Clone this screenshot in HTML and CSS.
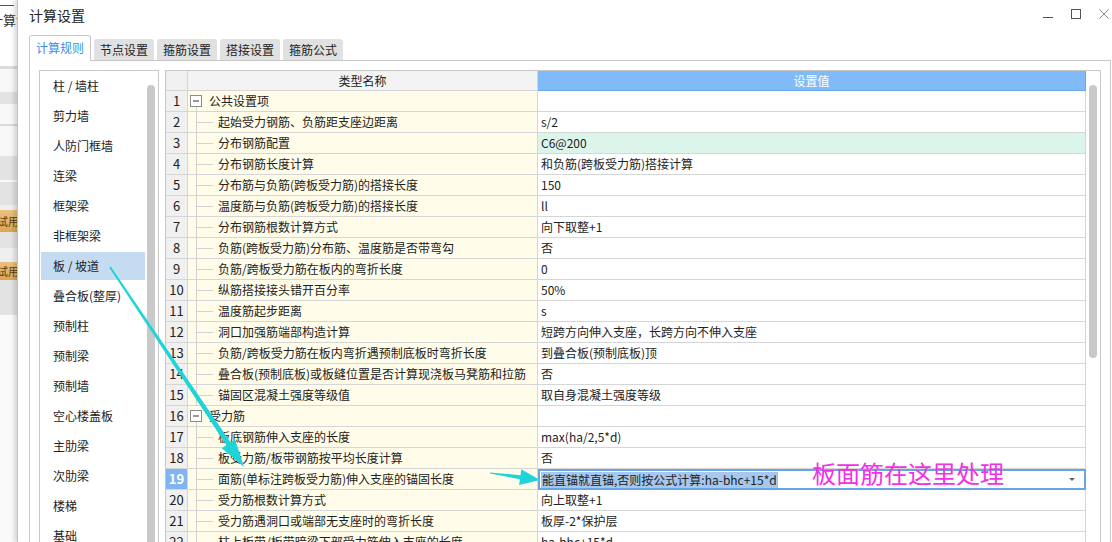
FILE: index.html
```html
<!DOCTYPE html>
<html lang="zh-CN">
<head>
<meta charset="utf-8">
<title>计算设置</title>
<link rel="stylesheet" href="styles.css">
</head>
<body>
<div class="app">
  <div class="bgstrip">
    <div class="bg-top"><span class="bg-dash"></span><span class="bg-title">计算设</span></div>
    <div class="bg-line"></div>
    <div class="bg-h23 bg-l"></div>
    <div class="bg-h12 bg-g"></div>
    <div class="bg-h20 bg-l"></div>
    <div class="bg-line2"></div>
    <div class="bg-h30 bg-l"></div>
    <div class="bg-h24 bg-g"></div>
    <div class="bg-h2 bg-l"></div>
    <div class="bg-h23 bg-g"></div>
    <div class="bg-h5 bg-m"></div>
    <div class="bg-badge bg-h22"><span>试用</span></div>
    <div class="bg-h16 bg-g"></div>
    <div class="bg-h14 bg-m"></div>
    <div class="bg-badge bg-h18"><span>试用</span></div>
    <div class="bg-h35 bg-g"></div>
    <div class="bg-rest"></div>
  </div>

  <div class="dialog">
    <div class="titlebar">
      <span class="title">计算设置</span>
      <svg class="winctl" width="72" height="24" viewBox="0 0 72 24">
        <line x1="3" y1="17.5" x2="13" y2="17.5" stroke="#555" stroke-width="1"/>
        <rect x="31.5" y="9.5" width="9" height="9" fill="none" stroke="#555" stroke-width="1"/>
        <line x1="59.5" y1="9.5" x2="68.5" y2="18.5" stroke="#8a8a8a" stroke-width="1"/>
        <line x1="68.5" y1="9.5" x2="59.5" y2="18.5" stroke="#8a8a8a" stroke-width="1"/>
      </svg>
    </div>

    <div class="tabs">
      <div class="tab active">计算规则</div>
      <div class="tab">节点设置</div>
      <div class="tab">箍筋设置</div>
      <div class="tab">搭接设置</div>
      <div class="tab">箍筋公式</div>
    </div>

    <div class="panel">
      <div class="list">
        <ul>
          <li>柱 / 墙柱</li>
          <li>剪力墙</li>
          <li>人防门框墙</li>
          <li>连梁</li>
          <li>框架梁</li>
          <li>非框架梁</li>
          <li class="sel">板 / 坡道</li>
          <li>叠合板(整厚)</li>
          <li>预制柱</li>
          <li>预制梁</li>
          <li>预制墙</li>
          <li>空心楼盖板</li>
          <li>主肋梁</li>
          <li>次肋梁</li>
          <li>楼梯</li>
          <li>基础</li>
        </ul>
        <div class="vscroll"><div class="thumb list-thumb"></div></div>
      </div>

      <div class="grid">
        <div class="rows">
          <div class="row head">
            <div class="num"></div>
            <div class="name hname">类型名称</div>
            <div class="val hval">设置值</div>
          </div>
          <div class="row"><div class="num">1</div><div class="name parent"><svg class="box" width="12" height="12" viewBox="0 0 12 12"><rect x="0.5" y="0.5" width="11" height="11" fill="#fff" stroke="#8c8c8c"/><line x1="3" y1="6" x2="9" y2="6" stroke="#333"/></svg>公共设置项</div><div class="val"></div></div>
          <div class="row"><div class="num">2</div><div class="name child">起始受力钢筋、负筋距支座边距离</div><div class="val">s/2</div></div>
          <div class="row"><div class="num">3</div><div class="name child">分布钢筋配置</div><div class="val mint">C6@200</div></div>
          <div class="row"><div class="num">4</div><div class="name child">分布钢筋长度计算</div><div class="val">和负筋(跨板受力筋)搭接计算</div></div>
          <div class="row"><div class="num">5</div><div class="name child">分布筋与负筋(跨板受力筋)的搭接长度</div><div class="val">150</div></div>
          <div class="row"><div class="num">6</div><div class="name child">温度筋与负筋(跨板受力筋)的搭接长度</div><div class="val">ll</div></div>
          <div class="row"><div class="num">7</div><div class="name child">分布钢筋根数计算方式</div><div class="val">向下取整+1</div></div>
          <div class="row"><div class="num">8</div><div class="name child">负筋(跨板受力筋)分布筋、温度筋是否带弯勾</div><div class="val">否</div></div>
          <div class="row"><div class="num">9</div><div class="name child">负筋/跨板受力筋在板内的弯折长度</div><div class="val">0</div></div>
          <div class="row"><div class="num">10</div><div class="name child">纵筋搭接接头错开百分率</div><div class="val">50%</div></div>
          <div class="row"><div class="num">11</div><div class="name child">温度筋起步距离</div><div class="val">s</div></div>
          <div class="row"><div class="num">12</div><div class="name child">洞口加强筋端部构造计算</div><div class="val">短跨方向伸入支座，长跨方向不伸入支座</div></div>
          <div class="row"><div class="num">13</div><div class="name child">负筋/跨板受力筋在板内弯折遇预制底板时弯折长度</div><div class="val">到叠合板(预制底板)顶</div></div>
          <div class="row"><div class="num">14</div><div class="name child">叠合板(预制底板)或板缝位置是否计算现浇板马凳筋和拉筋</div><div class="val">否</div></div>
          <div class="row"><div class="num">15</div><div class="name child">锚固区混凝土强度等级值</div><div class="val">取自身混凝土强度等级</div></div>
          <div class="row"><div class="num">16</div><div class="name parent"><svg class="box" width="12" height="12" viewBox="0 0 12 12"><rect x="0.5" y="0.5" width="11" height="11" fill="#fff" stroke="#8c8c8c"/><line x1="3" y1="6" x2="9" y2="6" stroke="#333"/></svg>受力筋</div><div class="val"></div></div>
          <div class="row"><div class="num">17</div><div class="name child">板底钢筋伸入支座的长度</div><div class="val">max(ha/2,5*d)</div></div>
          <div class="row"><div class="num">18</div><div class="name child">板受力筋/板带钢筋按平均长度计算</div><div class="val">否</div></div>
          <div class="row current"><div class="num">19</div><div class="name child">面筋(单标注跨板受力筋)伸入支座的锚固长度</div><div class="val edit"><span class="selected">能直锚就直锚,否则按公式计算:ha-bhc+15*d</span><span class="note">板面筋在这里处理</span><span class="caret"></span></div></div>
          <div class="row"><div class="num">20</div><div class="name child">受力筋根数计算方式</div><div class="val">向上取整+1</div></div>
          <div class="row"><div class="num">21</div><div class="name child">受力筋遇洞口或端部无支座时的弯折长度</div><div class="val">板厚-2*保护层</div></div>
          <div class="row"><div class="num">22</div><div class="name child">柱上板带/板带暗梁下部受力筋伸入支座的长度</div><div class="val">ha-bhc+15*d</div></div>
        </div>
        <div class="gscroll"><div class="thumb grid-thumb"></div></div>
      </div>
    </div>
  </div>

  <svg class="arrows" width="1112" height="542" viewBox="0 0 1112 542">
    <polygon fill="#1fd4d8" points="109.2,267.6 226.3,445.1 221.8,448.2 244,467 235.0,439.2 230.5,442.3 110.8,266.4"/>
    <polygon fill="#1fd4d8" points="489.9,473.6 519.9,479.2 519.1,485.1 540,480 521.3,469.3 520.5,475.2 490.1,472.4"/>
  </svg>
</div>
</body>
</html>
```

FILE: styles.css
```css
* { box-sizing: border-box; margin: 0; padding: 0; }

html, body {
  width: 1112px;
  height: 542px;
  overflow: hidden;
}

body {
  font-family: "Noto Sans CJK SC", "Noto Sans", sans-serif;
  font-size: 12px;
  color: #222;
  background: #fff;
}

.app {
  position: relative;
  display: flex;
  height: 542px;
}

/* ---------- background application strip ---------- */
.bgstrip {
  width: 17px;
  flex: none;
  display: flex;
  flex-direction: column;
  overflow: hidden;
  background: #fafafa;
}
.bg-top {
  height: 66px;
  background: #fff;
  display: flex;
  flex-direction: column;
}
.bg-dash {
  display: block;
  width: 14px;
  height: 1px;
  margin-top: 5px;
  background: #555;
}
.bg-title {
  display: block;
  margin-left: -10px;
  margin-top: 6px;
  font-size: 13px;
  line-height: 16px;
  white-space: nowrap;
  color: #333;
}
.bg-line { height: 3px; background: #dcdcdc; }
.bg-line2 { height: 2px; background: #d9d9d9; }
.bg-l { background: #f8f8f8; }
.bg-g { background: #e3e3e3; }
.bg-m { background: #efefef; }
.bg-h2 { height: 2px; }
.bg-h5 { height: 5px; }
.bg-h12 { height: 12px; }
.bg-h14 { height: 14px; }
.bg-h16 { height: 16px; }
.bg-h18 { height: 18px; }
.bg-h20 { height: 20px; }
.bg-h22 { height: 22px; }
.bg-h23 { height: 23px; }
.bg-h24 { height: 24px; }
.bg-h30 { height: 30px; }
.bg-h35 { height: 35px; }
.bg-badge {
  background: linear-gradient(#eac27e, #d9a457);
  overflow: hidden;
  display: flex;
  align-items: center;
}
.bg-badge span {
  margin-left: -3px;
  font-size: 11px;
  color: #5b3a0e;
  white-space: nowrap;
}
.bg-rest { flex: 1; background: #fafafa; }

/* ---------- dialog ---------- */
.dialog {
  flex: 1;
  min-width: 0;
  display: flex;
  flex-direction: column;
  background: #fff;
  border-left: 1px solid #c4c4c4;
  box-shadow: -3px 0 4px rgba(0, 0, 0, 0.14);
}

.titlebar {
  height: 35px;
  flex: none;
  display: flex;
  align-items: flex-start;
}
.title {
  margin: 5px 0 0 11px;
  font-size: 14px;
  line-height: 20px;
  color: #222;
}
.winctl {
  margin-left: auto;
  display: block;
}

.tabs {
  height: 25px;
  flex: none;
  display: flex;
  align-items: flex-end;
  gap: 3px;
  padding-left: 11px;
}
.tab {
  width: 60px;
  height: 21px;
  line-height: 21px;
  text-align: center;
  background: #e1e1e1;
  border-radius: 3px 3px 0 0;
  color: #222;
}
.tab.active {
  position: relative;
  z-index: 1;
  width: 62px;
  height: 26px;
  line-height: 24px;
  margin-bottom: -1px;
  background: #fff;
  border: 1px solid #c8c8c8;
  border-bottom: none;
  color: #3a8ee8;
}

.panel {
  flex: 1;
  min-height: 0;
  margin: 0 1px 0 11px;
  border: 1px solid #c8c8c8;
  border-bottom: none;
  padding: 9px 9px 0 9px;
  display: flex;
  gap: 6px;
  overflow: hidden;
}

/* ---------- left list ---------- */
.list {
  width: 120px;
  flex: none;
  border: 1px solid #c8c8c8;
  border-bottom: none;
  display: flex;
  overflow: hidden;
}
.list ul {
  list-style: none;
  width: 105px;
  flex: none;
  padding-top: 1px;
}
.list li {
  height: 28px;
  line-height: 28px;
  margin: 0 0 2px 1px;
  padding-left: 12px;
  white-space: nowrap;
}
.list li.sel { background: #c4dbf1; }

.vscroll { flex: 1; }
.thumb {
  background: #c9c9c9;
  border-radius: 4px;
}
.list-thumb {
  width: 8px;
  height: 520px;
  margin: 14px 0 0 2px;
}

/* ---------- grid ---------- */
.grid {
  flex: 1;
  min-width: 0;
  border: 1px solid #c8c8c8;
  border-bottom: none;
  display: flex;
  overflow: hidden;
}
.rows {
  width: 920px;
  flex: none;
  display: flex;
  flex-direction: column;
}
.row {
  display: flex;
  height: 21px;
  flex: none;
}
.row.head { height: 20px; }

.row > div {
  border-right: 1px solid #d6d6d6;
  border-bottom: 1px solid #d6d6d6;
  line-height: 20px;
  white-space: nowrap;
  overflow: hidden;
}
.row.head > div { line-height: 19px; }

.num {
  width: 22px;
  flex: none;
  text-align: center;
  background: #f0f0f0;
  font-size: 13px;
}
.name {
  width: 350px;
  flex: none;
  background-color: #fffce9;
  padding-left: 30px;
}
.val {
  width: 548px;
  flex: none;
  background: #fff;
  padding-left: 3px;
}

.name.hname {
  background: #f3f3f3;
  padding-left: 0;
  text-align: center;
}
.row.head > .val.hval {
  background: #80bbf7;
  border-right-color: #6aa8ec;
  border-bottom-color: #6aa8ec;
  color: #fff;
  text-align: center;
  padding-left: 0;
}

.name.child {
  background-image: linear-gradient(#d2d2d2, #d2d2d2), linear-gradient(#d2d2d2, #d2d2d2);
  background-size: 1px 100%, 17px 1px;
  background-position: 8px 0, 8px 10px;
  background-repeat: no-repeat;
}
.name.parent {
  padding-left: 2px;
  display: flex;
  align-items: center;
  background-image: linear-gradient(#d2d2d2, #d2d2d2);
  background-size: 1px 4px;
  background-position: 8px 16px;
  background-repeat: no-repeat;
}
.box {
  display: block;
  flex: none;
  margin-right: 7px;
}

.val.mint { background: #dcf5eb; }

/* current row */
.row.current > .num {
  background: #80b5ef;
  color: #fff;
  font-weight: bold;
}
.row.current > .val.edit {
  position: relative;
  overflow: visible;
  display: flex;
  align-items: center;
  border: 2px solid #68a6e3;
  padding-left: 1px;
}
.selected {
  line-height: 16px;
  padding: 0 1px;
  background: #a6c7ee;
}
.note {
  position: absolute;
  left: 272px;
  top: -10px;
  font-size: 24px;
  line-height: 24px;
  color: #f52fe6;
  white-space: nowrap;
}
.caret {
  margin-left: auto;
  margin-right: 9px;
  width: 0;
  height: 0;
  border-left: 3px solid transparent;
  border-right: 3px solid transparent;
  border-top: 3px solid #666;
}

.gscroll { flex: 1; }
.grid-thumb {
  width: 8px;
  height: 273px;
  margin: 14px 0 0 3px;
}

/* annotation arrows over the screenshot */
.arrows {
  position: absolute;
  left: 0;
  top: 0;
  pointer-events: none;
  z-index: 5;
}
```
